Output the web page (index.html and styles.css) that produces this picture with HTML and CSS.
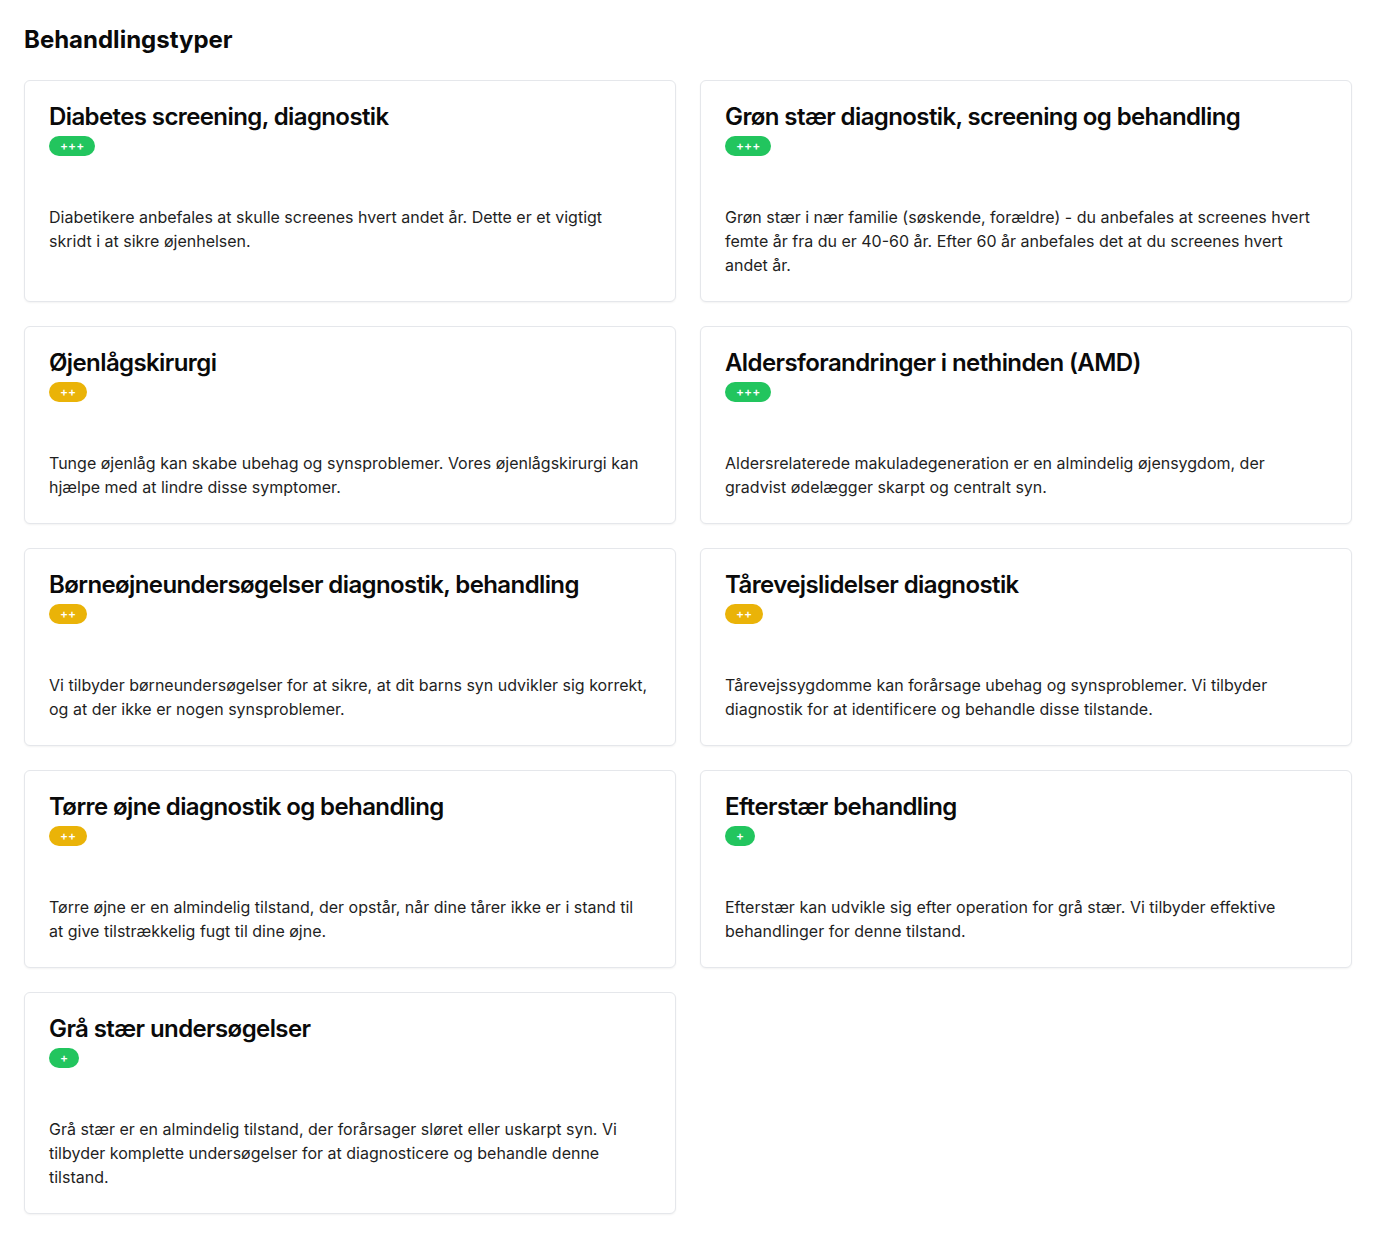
FILE: index.html
```html
<!DOCTYPE html>
<html lang="da">
<head>
<meta charset="utf-8">
<title>Behandlingstyper</title>
<link rel="stylesheet" href="styles.css">
</head>
<body>
<main class="page">
  <h1 class="page-title">Behandlingstyper</h1>
  <div class="grid">
    <article class="card">
      <h2 class="card-title">Diabetes screening, diagnostik</h2>
      <div><span class="badge green">+++</span></div>
      <p class="card-text">Diabetikere anbefales at skulle screenes hvert andet år. Dette er et vigtigt<br>skridt i at sikre øjenhelsen.</p>
    </article>
    <article class="card">
      <h2 class="card-title">Grøn stær diagnostik, screening og behandling</h2>
      <div><span class="badge green">+++</span></div>
      <p class="card-text">Grøn stær i nær familie (søskende, forældre) - du anbefales at screenes hvert femte år fra du er 40-60 år. Efter 60 år anbefales det at du screenes hvert andet år.</p>
    </article>
    <article class="card">
      <h2 class="card-title">Øjenlågskirurgi</h2>
      <div><span class="badge yellow">++</span></div>
      <p class="card-text">Tunge øjenlåg kan skabe ubehag og synsproblemer. Vores øjenlågskirurgi kan hjælpe med at lindre disse symptomer.</p>
    </article>
    <article class="card">
      <h2 class="card-title">Aldersforandringer i nethinden (AMD)</h2>
      <div><span class="badge green">+++</span></div>
      <p class="card-text">Aldersrelaterede makuladegeneration er en almindelig øjensygdom, der gradvist ødelægger skarpt og centralt syn.</p>
    </article>
    <article class="card">
      <h2 class="card-title">Børneøjneundersøgelser diagnostik, behandling</h2>
      <div><span class="badge yellow">++</span></div>
      <p class="card-text">Vi tilbyder børneundersøgelser for at sikre, at dit barns syn udvikler sig korrekt, og at der ikke er nogen synsproblemer.</p>
    </article>
    <article class="card">
      <h2 class="card-title">Tårevejslidelser diagnostik</h2>
      <div><span class="badge yellow">++</span></div>
      <p class="card-text">Tårevejssygdomme kan forårsage ubehag og synsproblemer. Vi tilbyder diagnostik for at identificere og behandle disse tilstande.</p>
    </article>
    <article class="card">
      <h2 class="card-title">Tørre øjne diagnostik og behandling</h2>
      <div><span class="badge yellow">++</span></div>
      <p class="card-text">Tørre øjne er en almindelig tilstand, der opstår, når dine tårer ikke er i stand til at give tilstrækkelig fugt til dine øjne.</p>
    </article>
    <article class="card">
      <h2 class="card-title">Efterstær behandling</h2>
      <div><span class="badge green">+</span></div>
      <p class="card-text">Efterstær kan udvikle sig efter operation for grå stær. Vi tilbyder effektive behandlinger for denne tilstand.</p>
    </article>
    <article class="card">
      <h2 class="card-title">Grå stær undersøgelser</h2>
      <div><span class="badge green">+</span></div>
      <p class="card-text">Grå stær er en almindelig tilstand, der forårsager sløret eller uskarpt syn. Vi tilbyder komplette undersøgelser for at diagnosticere og behandle denne tilstand.</p>
    </article>
  </div>
</main>
</body>
</html>
```

FILE: styles.css
```css
* { box-sizing: border-box; }
html, body { margin: 0; padding: 0; background: #ffffff; }
body {
  font-family: Inter, "Noto Sans", sans-serif;
  color: #0a0a0a;
}
.page {
  padding: 24px;
}
.page-title {
  margin: 0 0 24px 0;
  font-size: 24px;
  line-height: 32px;
  font-weight: 700;
  color: #0a0a0a;
}
.grid {
  display: grid;
  grid-template-columns: 1fr 1fr;
  gap: 24px;
}
.card {
  border: 1px solid #e5e7eb;
  border-radius: 6px;
  background: #fff;
  padding: 24px;
  box-shadow: 0 1px 2px rgba(0,0,0,0.05);
}
.card-title {
  margin: 0;
  font-size: 24px;
  line-height: 24px;
  font-weight: 600;
  letter-spacing: -0.025em;
  color: #0a0a0a;
}
.badge {
  display: inline-block;
  margin-top: 7px;
  height: 20px;
  padding: 2px 11px;
  border-radius: 10px;
  font-size: 12px;
  line-height: 16px;
  font-weight: 600;
  color: #ffffff;
  vertical-align: top;
}
.badge.green { background: #22c55e; }
.badge.yellow { background: #eab308; }
.card-text {
  margin: 49px 0 0 0;
  font-size: 16px;
  line-height: 24px;
  color: #1f1f1f;
}
```
